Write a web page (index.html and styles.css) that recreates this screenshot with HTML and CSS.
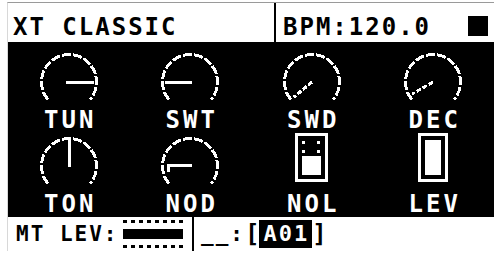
FILE: index.html
```html
<!DOCTYPE html>
<html>
<head>
<meta charset="utf-8">
<link rel="stylesheet" href="styles.css">
</head>
<body>
<div class="screen">
  <div class="header">
    <div class="title">XT CLASSIC</div>
    <div class="bpm"><span class="bpm-text">BPM:120.0</span><span class="stop"></span></div>
  </div>
  <div class="main">
    <div class="cell">
      <svg class="icon" width="62" height="50" viewBox="0 0 62 50"><path class="arc" d="M9.93 47.68 A27.5 27.5 0 1 1 52.07 47.68"/><line class="ptr" x1="28" y1="30" x2="56" y2="30"/></svg>
      <div class="label">TUN</div>
    </div>
    <div class="cell">
      <svg class="icon" width="62" height="50" viewBox="0 0 62 50"><path class="arc" d="M9.93 47.68 A27.5 27.5 0 1 1 52.07 47.68"/><line class="ptr" x1="33" y1="30" x2="6" y2="30"/></svg>
      <div class="label">SWT</div>
    </div>
    <div class="cell">
      <svg class="icon" width="62" height="50" viewBox="0 0 62 50"><path class="arc" d="M9.93 47.68 A27.5 27.5 0 1 1 52.07 47.68"/><line class="ptr dash" x1="31" y1="30" x2="12.6" y2="45.4"/></svg>
      <div class="label">SWD</div>
    </div>
    <div class="cell">
      <svg class="icon" width="62" height="50" viewBox="0 0 62 50"><path class="arc" d="M9.93 47.68 A27.5 27.5 0 1 1 52.07 47.68"/><line class="ptr dash" x1="31" y1="30" x2="10.2" y2="42"/></svg>
      <div class="label">DEC</div>
    </div>
    <div class="cell">
      <svg class="icon" width="62" height="50" viewBox="0 0 62 50"><path class="arc" d="M9.93 47.68 A27.5 27.5 0 1 1 52.07 47.68"/><line class="ptr" x1="31" y1="31" x2="31" y2="4"/></svg>
      <div class="label">TON</div>
    </div>
    <div class="cell">
      <svg class="icon" width="62" height="50" viewBox="0 0 62 50"><path class="arc" d="M9.93 47.68 A27.5 27.5 0 1 1 52.07 47.68"/><polyline class="ptr" points="33,29 9,29 9,36"/></svg>
      <div class="label">NOD</div>
    </div>
    <div class="cell">
      <svg class="icon fader" width="62" height="50" viewBox="0 0 62 50">
        <rect x="15.5" y="-1.5" width="30" height="46" fill="none" stroke="#fff" stroke-width="3"/>
        <rect x="21" y="5" width="3" height="3" fill="#fff"/>
        <rect x="36" y="5" width="3" height="3" fill="#fff"/>
        <rect x="21" y="14" width="3" height="3" fill="#fff"/>
        <rect x="36" y="14" width="3" height="3" fill="#fff"/>
        <rect x="21" y="20" width="19" height="19" fill="#fff"/>
      </svg>
      <div class="label">NOL</div>
    </div>
    <div class="cell">
      <svg class="icon fader" width="62" height="50" viewBox="0 0 62 50">
        <rect x="17.5" y="-1.5" width="27" height="46" fill="none" stroke="#fff" stroke-width="3"/>
        <rect x="23" y="4" width="16" height="35" fill="#fff"/>
      </svg>
      <div class="label">LEV</div>
    </div>
  </div>
  <div class="footer">
    <div class="mt">
      <span class="ftext">MT LEV:</span>
      <span class="meter"><span class="dots"></span><span class="fill"></span><span class="dots"></span></span>
    </div>
    <div class="sel">
      <span class="ftext">__:</span>
      <span class="brk">[</span><span class="inv">A01</span><span class="brk">]</span>
    </div>
  </div>
</div>
</body>
</html>
```

FILE: styles.css
```css
html, body {
  margin: 0;
  padding: 0;
  background: #fff;
}
body {
  width: 498px;
  height: 253px;
  overflow: hidden;
  font-family: "DejaVu Sans Mono", "Liberation Mono", monospace;
  font-weight: bold;
  color: #000;
}
.screen {
  margin: 2px 0 0 7px;
  width: 486px;
  border-top: 1px solid #9a9a9a;
  border-left: 1px solid #d8d8d8;
}
.header {
  height: 39px;
  display: flex;
}
.title {
  box-sizing: border-box;
  width: 268px;
  border-right: 2px solid #000;
  padding: 12px 0 0 5px;
  font-size: 24px;
  line-height: 24px;
  letter-spacing: 2px;
}
.bpm {
  flex: 1;
  display: flex;
  justify-content: space-between;
  padding: 12px 6px 0 7px;
  font-size: 24px;
  line-height: 24px;
  letter-spacing: 2px;
}
.stop {
  width: 20px;
  height: 20px;
  margin-top: 1px;
  background: #000;
}
.main {
  background: #000;
  height: 175px;
  box-sizing: border-box;
  padding: 10px 0 0 0;
  display: grid;
  grid-template-columns: repeat(4, 1fr);
  grid-template-rows: 80px 79px;
  row-gap: 4px;
}
.cell {
  display: flex;
  flex-direction: column;
  align-items: center;
}
.icon {
  display: block;
  overflow: visible;
  shape-rendering: crispEdges;
}
.arc {
  fill: none;
  stroke: #fff;
  stroke-width: 3;
  stroke-dasharray: 9 2;
}
.ptr {
  fill: none;
  stroke: #fff;
  stroke-width: 3;
}
.dash {
  stroke-dasharray: 5 2;
}
.label {
  color: #fff;
  font-size: 24px;
  line-height: 24px;
  letter-spacing: 3px;
  padding-left: 3px;
  margin-top: 6px;
}
.footer {
  height: 34px;
  display: flex;
  align-items: stretch;
}
.mt {
  box-sizing: border-box;
  width: 186px;
  border-right: 2px solid #000;
  display: flex;
  align-items: center;
  padding-left: 8px;
}
.ftext {
  font-size: 21px;
  line-height: 21px;
  letter-spacing: 2px;
}
.meter {
  display: flex;
  flex-direction: column;
  justify-content: space-between;
  width: 60px;
  height: 28px;
  margin-left: 4px;
}
.dots {
  height: 3px;
  background: repeating-linear-gradient(90deg, #000 0 4px, transparent 4px 8px);
}
.fill {
  height: 10px;
  background: #000;
}
.sel {
  display: flex;
  align-items: center;
  padding-left: 7px;
}
.brk {
  font-size: 24px;
  line-height: 28px;
}
.inv {
  background: #000;
  color: #fff;
  font-size: 22px;
  line-height: 28px;
  padding: 0 3px 0 4px;
  letter-spacing: 2px;
}
```
